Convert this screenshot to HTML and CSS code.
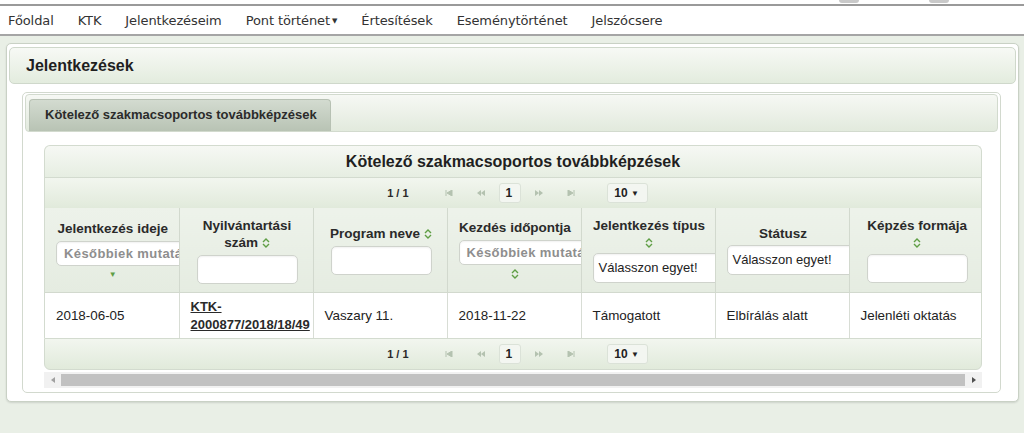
FILE: index.html
```html
<!DOCTYPE html>
<html lang="hu">
<head>
  <meta charset="UTF-8">
  <title>Jelentkezések</title>
  <link rel="stylesheet" href="styles.css">
</head>
<body>
  <div class="top">
    <span class="logo-bit"></span>
    <span class="logo-bit"></span>
  </div>
  <nav class="menu">
    <a href="#">Főoldal</a>
    <a href="#">KTK</a>
    <a href="#">Jelentkezéseim</a>
    <a href="#">Pont történet<span class="caret">▼</span></a>
    <a href="#">Értesítések</a>
    <a href="#">Eseménytörténet</a>
    <a href="#">Jelszócsere</a>
  </nav>

  <div class="page">
    <div class="panel">
      <div class="panel-head">Jelentkezések</div>

      <div class="tabview">
        <div class="tab-nav">
          <div class="tab">Kötelező szakmacsoportos továbbképzések</div>
        </div>

        <div class="tab-body">
          <div class="datatable">
            <div class="dt-caption">Kötelező szakmacsoportos továbbképzések</div>

            <div class="pager pager-top">
              <span class="pg-current">1 / 1</span>
              <span class="pg-btn">
                <svg width="8" height="6" viewBox="0 0 8 6"><path d="M1 0v6M7 0L2 3l5 3z" fill="#b4c2b0" stroke="#b4c2b0" stroke-width="1"/></svg>
              </span>
              <span class="pg-btn">
                <svg width="10" height="6" viewBox="0 0 10 6"><path d="M5 0L1 3l4 3zM9 0L5 3l4 3z" fill="#b4c2b0"/></svg>
              </span>
              <span class="pg-page">1</span>
              <span class="pg-btn">
                <svg width="10" height="6" viewBox="0 0 10 6"><path d="M1 0l4 3-4 3zM5 0l4 3-4 3z" fill="#b4c2b0"/></svg>
              </span>
              <span class="pg-btn">
                <svg width="8" height="6" viewBox="0 0 8 6"><path d="M7 0v6M1 0l5 3-5 3z" fill="#b4c2b0" stroke="#b4c2b0" stroke-width="1"/></svg>
              </span>
              <span class="pg-rows">10 <span class="pg-arrow">▼</span></span>
            </div>

            <div class="dt-scroll">
              <table class="grid">
                <thead>
                  <tr>
                    <th>
                      <div class="th-title">Jelentkezés ideje</div>
                      <div class="filter filter-wide filter-hint">Későbbiek mutatása</div>
                      <div class="sort-down">▼</div>
                    </th>
                    <th>
                      <div class="th-title">Nyilvántartási<br>szám <svg class="sort" width="8" height="10" viewBox="0 0 8 10"><path d="M1 4l3-3 3 3M1 6l3 3 3-3" fill="none" stroke="#5f9e45" stroke-width="1.4"/></svg></div>
                      <div class="filter filter-box"></div>
                    </th>
                    <th>
                      <div class="th-title">Program neve <svg class="sort" width="8" height="10" viewBox="0 0 8 10"><path d="M1 4l3-3 3 3M1 6l3 3 3-3" fill="none" stroke="#5f9e45" stroke-width="1.4"/></svg></div>
                      <div class="filter filter-box"></div>
                    </th>
                    <th>
                      <div class="th-title">Kezdés időpontja</div>
                      <div class="filter filter-wide filter-hint">Későbbiek mutatása</div>
                      <div class="sort-row"><svg class="sort" width="8" height="10" viewBox="0 0 8 10"><path d="M1 4l3-3 3 3M1 6l3 3 3-3" fill="none" stroke="#5f9e45" stroke-width="1.4"/></svg></div>
                    </th>
                    <th>
                      <div class="th-title">Jelentkezés típus</div>
                      <div class="sort-row"><svg class="sort" width="8" height="10" viewBox="0 0 8 10"><path d="M1 4l3-3 3 3M1 6l3 3 3-3" fill="none" stroke="#5f9e45" stroke-width="1.4"/></svg></div>
                      <div class="filter filter-wide filter-select">Válasszon egyet!</div>
                    </th>
                    <th>
                      <div class="th-title">Státusz</div>
                      <div class="filter filter-wide filter-select">Válasszon egyet!</div>
                    </th>
                    <th>
                      <div class="th-title">Képzés formája</div>
                      <div class="sort-row"><svg class="sort" width="8" height="10" viewBox="0 0 8 10"><path d="M1 4l3-3 3 3M1 6l3 3 3-3" fill="none" stroke="#5f9e45" stroke-width="1.4"/></svg></div>
                      <div class="filter filter-box"></div>
                    </th>
                  </tr>
                </thead>
                <tbody>
                  <tr>
                    <td>2018-06-05</td>
                    <td><a href="#" class="reg-link">KTK-<br>2000877/2018/18/49</a></td>
                    <td>Vaszary 11.</td>
                    <td>2018-11-22</td>
                    <td>Támogatott</td>
                    <td>Elbírálás alatt</td>
                    <td>Jelenléti oktatás</td>
                  </tr>
                </tbody>
              </table>
            </div>

            <div class="pager pager-bottom">
              <span class="pg-current">1 / 1</span>
              <span class="pg-btn">
                <svg width="8" height="6" viewBox="0 0 8 6"><path d="M1 0v6M7 0L2 3l5 3z" fill="#b4c2b0" stroke="#b4c2b0" stroke-width="1"/></svg>
              </span>
              <span class="pg-btn">
                <svg width="10" height="6" viewBox="0 0 10 6"><path d="M5 0L1 3l4 3zM9 0L5 3l4 3z" fill="#b4c2b0"/></svg>
              </span>
              <span class="pg-page">1</span>
              <span class="pg-btn">
                <svg width="10" height="6" viewBox="0 0 10 6"><path d="M1 0l4 3-4 3zM5 0l4 3-4 3z" fill="#b4c2b0"/></svg>
              </span>
              <span class="pg-btn">
                <svg width="8" height="6" viewBox="0 0 8 6"><path d="M7 0v6M1 0l5 3-5 3z" fill="#b4c2b0" stroke="#b4c2b0" stroke-width="1"/></svg>
              </span>
              <span class="pg-rows">10 <span class="pg-arrow">▼</span></span>
            </div>
          </div>

          <div class="hscroll">
            <span class="hs-arrow">
              <svg width="4" height="6" viewBox="0 0 4 6"><path d="M4 0L0 3l4 3z" fill="#a0a0a0"/></svg>
            </span>
            <span class="hs-thumb"></span>
            <span class="hs-arrow">
              <svg width="4" height="6" viewBox="0 0 4 6"><path d="M0 0l4 3-4 3z" fill="#505050"/></svg>
            </span>
          </div>
        </div>
      </div>
    </div>
  </div>
</body>
</html>
```

FILE: styles.css
```css
body {
  margin: 0;
  padding: 0;
  font-family: "Liberation Sans", Arial, sans-serif;
  background-color: #e9efe6;
  color: #222;
  height: 433px;
  overflow: hidden;
}
.top {
  height: 4px;
  background-color: #fff;
  border-bottom: 2px solid #9a9a9a;
  display: flex;
  justify-content: flex-end;
  gap: 70px;
  padding-right: 75px;
}
.logo-bit {
  width: 20px;
  height: 3px;
  background-color: #c9c9c9;
  border-radius: 0 0 10px 10px;
}
.menu {
  height: 28px;
  background-color: #fff;
  border-bottom: 2px solid #a5a5a5;
  display: flex;
  align-items: center;
  padding-left: 8px;
}
.menu a {
  font-family: "DejaVu Sans", Verdana, sans-serif;
  font-size: 13px;
  color: #333;
  text-decoration: none;
  margin-right: 24px;
  letter-spacing: -0.1px;
}
.menu .caret {
  font-size: 7px;
  margin-left: 2px;
  vertical-align: 2px;
}
.page {
  padding: 7px 5px 0 6px;
}
.panel {
  background-color: #fff;
  border: 1px solid #c9d1c5;
  border-radius: 5px;
  padding: 3px 2px 8px 2px;
  box-shadow: 0 1px 2px rgba(0, 0, 0, 0.12);
}
.panel-head {
  height: 35px;
  line-height: 35px;
  border: 1px solid #cfd8cb;
  border-radius: 5px;
  background: linear-gradient(#f7f9f5, #e3ecde);
  padding-left: 16px;
  font-size: 16px;
  font-weight: bold;
  color: #1f1f1f;
}
.tabview {
  margin: 8px 15px 0 13px;
  border: 1px solid #d2d9ce;
  border-radius: 5px;
  padding: 1px 2px 4px 2px;
}
.tab-nav {
  height: 32px;
  border: 1px solid #d2dace;
  border-radius: 4px;
  background: linear-gradient(#f6f8f4, #e2eadd);
  padding: 4px 0 0 3px;
}
.tab {
  display: inline-block;
  height: 31px;
  line-height: 30px;
  padding: 0 13px 0 15px;
  border: 1px solid #b7c1b3;
  border-bottom: none;
  border-radius: 4px 4px 0 0;
  background: linear-gradient(#d3dbd0, #b8c3b4);
  font-size: 13px;
  font-weight: bold;
  color: #2b2b2b;
}
.tab-body {
  padding: 13px 17px 0 19px;
}
.datatable {
  width: 938px;
}
.dt-caption {
  height: 31px;
  line-height: 31px;
  text-align: center;
  font-size: 16px;
  font-weight: bold;
  color: #1f1f1f;
  border: 1px solid #d3dbcf;
  border-bottom: none;
  border-radius: 6px 6px 0 0;
  background: linear-gradient(#f6f8f4, #e6eee2);
}
.pager {
  height: 30px;
  display: flex;
  align-items: center;
  justify-content: center;
  border: 1px solid #d3dbcf;
  background: linear-gradient(#f2f6ef, #e1eadb);
  padding-left: 9px;
}
.pager-top {
  border-bottom: none;
}
.pager-bottom {
  border-radius: 0 0 6px 6px;
}
.pg-current {
  font-size: 11px;
  font-weight: bold;
  color: #2a2a2a;
  margin-right: 24px;
}
.pg-btn {
  display: inline-flex;
  align-items: center;
  justify-content: center;
  width: 32px;
  height: 20px;
}
.pg-page, .pg-rows {
  display: inline-block;
  height: 18px;
  line-height: 18px;
  border: 1px solid #dbe2d8;
  border-radius: 3px;
  font-size: 12px;
  font-weight: bold;
  color: #222;
  background: #f3f6f1;
}
.pg-page {
  padding: 0 8px 0 6px;
  margin: 0 2px;
}
.pg-rows {
  padding: 0 8px 0 6px;
  margin-left: 20px;
}
.pg-arrow {
  font-size: 8px;
  vertical-align: 1px;
}
.dt-scroll {
  overflow: hidden;
  border-left: 1px solid #d3dbcf;
  border-right: 1px solid #d3dbcf;
}
.grid {
  width: 938px;
  table-layout: fixed;
  border-collapse: collapse;
}
.grid th {
  height: 84px;
  padding: 0 9px 0 11px;
  border-right: 1px solid #d2d9ce;
  border-bottom: 1px solid #d2d9ce;
  background: linear-gradient(#edf2ea, #e5ece1);
  font-size: 13.5px;
  font-weight: bold;
  color: #2a2a2a;
  text-align: center;
  vertical-align: middle;
  overflow: hidden;
  white-space: nowrap;
}
.grid td {
  height: 45px;
  padding: 0 9px 0 11px;
  border-right: 1px solid #d8ddd5;
  font-size: 13.4px;
  color: #222;
  vertical-align: middle;
  white-space: nowrap;
  overflow: hidden;
  background-color: #fff;
}
.grid th:last-child, .grid td:last-child {
  border-right: none;
}
.th-title {
  line-height: 17px;
}
.sort {
  vertical-align: -1px;
}
.sort-row {
  height: 14px;
  line-height: 14px;
  margin-top: 2px;
}
.sort-down {
  font-size: 8px;
  color: #5f9e45;
  margin-top: 4px;
  height: 10px;
}
.filter {
  height: 25px;
  border: 1px solid #cfd3cc;
  border-radius: 5px;
  background-color: #fff;
  box-sizing: border-box;
  box-shadow: inset 0 1px 2px rgba(0, 0, 0, 0.06);
  margin-top: 4px;
}
.filter-box {
  width: 101px;
  height: 29px;
  margin-left: auto;
  margin-right: auto;
}
.filter-wide {
  width: 150px;
  text-align: left;
  padding-left: 7px;
  line-height: 23px;
}
.filter-hint {
  font-size: 13px;
  font-weight: bold;
  color: #8e8e8e;
  letter-spacing: 0.4px;
}
.filter-select {
  height: 30px;
  line-height: 28px;
  font-weight: normal;
  font-size: 13px;
  color: #222;
  padding-left: 5px;
  margin-top: 3px;
}
.reg-link {
  color: #2a2a2a;
  font-weight: bold;
  font-size: 13px;
  line-height: 18px;
  display: inline-block;
  white-space: normal;
}
.hscroll {
  width: 938px;
  height: 16px;
  margin-top: 2px;
  display: flex;
  align-items: center;
  background-color: #f1f1f1;
}
.hs-arrow {
  width: 17px;
  display: inline-flex;
  justify-content: center;
}
.hs-thumb {
  flex: 1;
  height: 12px;
  background-color: #c1c1c1;
}
```
